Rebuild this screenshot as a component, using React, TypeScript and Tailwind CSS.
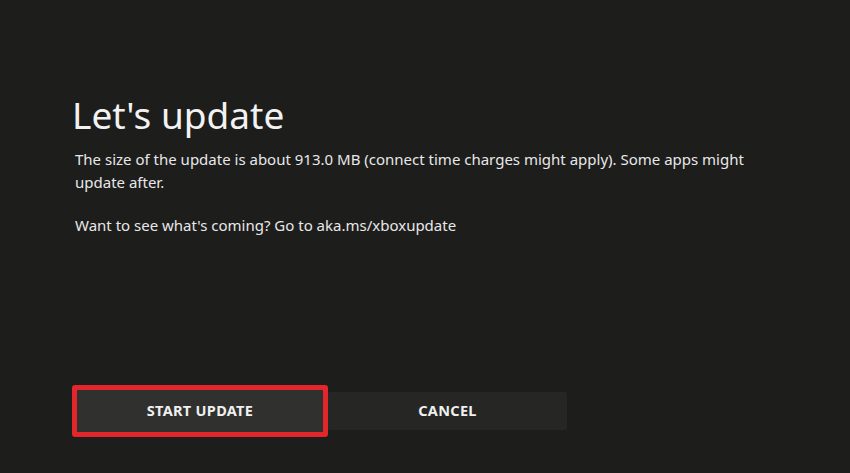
export default function App() {
  return (
    <div className="h-[473px] w-[850px] overflow-hidden bg-[#1d1d1c] text-white" style={{ fontFamily: '"Noto Sans", "Open Sans", sans-serif' }}>
      <div className="flex flex-col pl-[72px] pt-[92px]">
        <h1 className="text-[37px] leading-[46px] font-normal text-[#f2f2f2]">Let's update</h1>
        <p className="mt-[10px] pl-[3px] w-[700px] text-[15px] leading-[23px] text-[#e8e8e8]">
          The size of the update is about 913.0 MB (connect time charges might apply). Some apps might update after.
        </p>
        <p className="mt-[20px] pl-[3px] text-[15px] leading-[23px] text-[#e8e8e8]">
          Want to see what's coming? Go to aka.ms/xboxupdate
        </p>
        <div className="mt-[148px] flex items-center">
          <button className="flex h-[52px] w-[256px] items-center justify-center rounded-[3px] border-[5px] border-[#e2262b] bg-[#30312f] text-[14.5px] font-bold tracking-[0.3px] text-[#f0f0f0]">
            START UPDATE
          </button>
          <button className="flex h-[38px] w-[239px] items-center justify-center rounded-[2px] bg-[#262725] text-[14.5px] font-bold tracking-[0.3px] text-[#f0f0f0]">
            CANCEL
          </button>
        </div>
      </div>
    </div>
  );
}
